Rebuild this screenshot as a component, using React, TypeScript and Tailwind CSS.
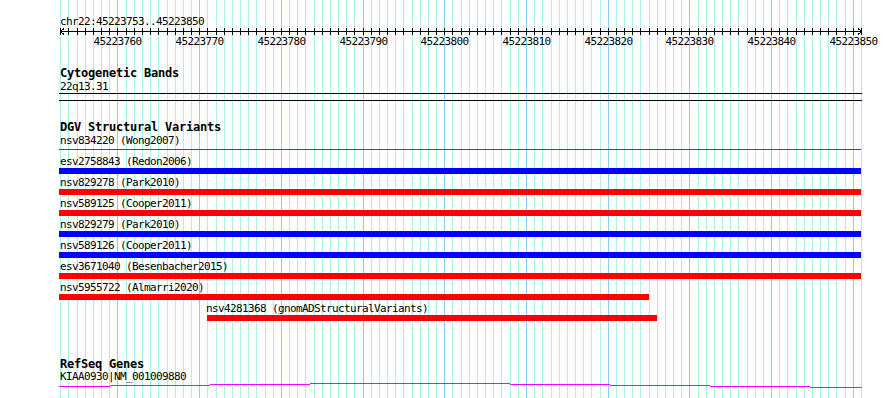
const START = 45223753
const X0 = 60.3
const PX = 8.17

const bx = (bp: number) => Math.round(X0 + (bp - START) * PX)

const bases = Array.from({ length: 99 }, (_, i) => START + i)
const majors = bases.filter((b) => b % 10 === 0)

const mono = "font-['DejaVu_Sans_Mono',monospace] text-[11px] tracking-[-0.62px] leading-[13px] text-black whitespace-pre"
const title = "font-['DejaVu_Sans_Mono',monospace] font-bold text-[12px] tracking-[-0.22px] leading-[13px] text-black whitespace-pre"

const variants = [
  { label: "esv2758843 (Redon2006)", pad: "pl-[60px]", bar: "ml-[59px] w-[802px] bg-[#0000ff]" },
  { label: "nsv829278 (Park2010)", pad: "pl-[60px]", bar: "ml-[59px] w-[802px] bg-[#ff0000]" },
  { label: "nsv589125 (Cooper2011)", pad: "pl-[60px]", bar: "ml-[59px] w-[802px] bg-[#ff0000]" },
  { label: "nsv829279 (Park2010)", pad: "pl-[60px]", bar: "ml-[59px] w-[802px] bg-[#0000ff]" },
  { label: "nsv589126 (Cooper2011)", pad: "pl-[60px]", bar: "ml-[59px] w-[802px] bg-[#0000ff]" },
  { label: "esv3671040 (Besenbacher2015)", pad: "pl-[60px]", bar: "ml-[59px] w-[802px] bg-[#ff0000]" },
  { label: "nsv5955722 (Almarri2020)", pad: "pl-[60px]", bar: "ml-[59px] w-[590px] bg-[#ff0000]" },
  { label: "nsv4281368 (gnomADStructuralVariants)", pad: "pl-[206px]", bar: "ml-[207px] w-[450px] bg-[#ff0000]" },
]

// intron hat of the gene model, drawn as pixel steps
const hat = [
  [59, 110, 4], [110, 210, 3], [210, 310, 2], [310, 410, 1], [410, 510, 1],
  [510, 610, 2], [610, 710, 3], [710, 810, 4], [810, 862, 5],
]

function Grid() {
  return (
    <svg className="absolute inset-0" width={890} height={398} shapeRendering="crispEdges">
      {bases.map((b) => (
        <line
          key={b}
          x1={bx(b) + 0.5}
          x2={bx(b) + 0.5}
          y1={0}
          y2={398}
          stroke={b % 10 === 0 ? "#87cefa" : "#afeeee"}
          strokeWidth={1}
        />
      ))}
    </svg>
  )
}

function Ruler() {
  return (
    <div>
      <div className={`${mono} h-[13px] pl-[60px]`}>chr22:45223753..45223850</div>
      <svg className="block" width={890} height={7} shapeRendering="crispEdges">
        <line x1={60} x2={862} y1={3.5} y2={3.5} stroke="#000" />
        {bases.map((b) => (
          <line key={b} x1={bx(b) + 0.5} x2={bx(b) + 0.5} y1={0} y2={7} stroke="#000" />
        ))}
        <polyline points="64,0.5 60.5,3.5 64,6.5" fill="none" stroke="#000" />
        <polyline points="858,0.5 861.5,3.5 858,6.5" fill="none" stroke="#000" />
      </svg>
      <div className="relative h-[13px]">
        {majors.map((b) => (
          <span key={b} className={`${mono} absolute top-0 w-[48px] text-center`} style={{ left: bx(b) - 23.5 }}>
            {b}
          </span>
        ))}
      </div>
    </div>
  )
}

export default function App() {
  return (
    <div className="relative w-[890px] h-[398px] bg-white overflow-hidden">
      <Grid />
      <div className="relative pt-[15px]">
        <Ruler />

        <div className={`${title} h-[13px] pl-[60px] mt-[19px]`}>Cytogenetic Bands</div>
        <div className={`${mono} h-[13px] pl-[60px]`}>22q13.31</div>
        <div className="ml-[59px] w-[803px] h-px bg-black" />
        <div className="ml-[59px] w-[803px] h-px bg-black mt-[6px]" />

        <div className={`${title} h-[13px] pl-[60px] mt-[20px]`}>DGV Structural Variants</div>
        <div className={`${mono} h-[13px] pl-[60px]`}>nsv834220 (Wong2007)</div>
        <div className="ml-[59px] w-[802px] h-px bg-[#ff0000] mt-[2px]" />

        <div className="mt-[5px] flex flex-col gap-[2px]">
          {variants.map((v) => (
            <div key={v.label}>
              <div className={`${mono} h-[13px] ${v.pad}`}>{v.label}</div>
              <div className={`h-[6px] ${v.bar}`} />
            </div>
          ))}
        </div>

        <div className="font-['DejaVu_Sans_Mono',monospace] font-bold text-[12px] tracking-[-0.22px] leading-[11px] h-[11px] text-black pl-[60px] mt-[38px]">
          RefSeq Genes
        </div>
        <div className={`${mono} h-[13px] pl-[60px]`}>KIAA0930|NM_001009880</div>
        <svg className="block -mt-[1px]" width={890} height={8} shapeRendering="crispEdges">
          {hat.map(([a, b, y]) => (
            <line key={a} x1={a} x2={b} y1={y + 0.5} y2={y + 0.5} stroke="#ff00ff" />
          ))}
        </svg>
      </div>
    </div>
  )
}
